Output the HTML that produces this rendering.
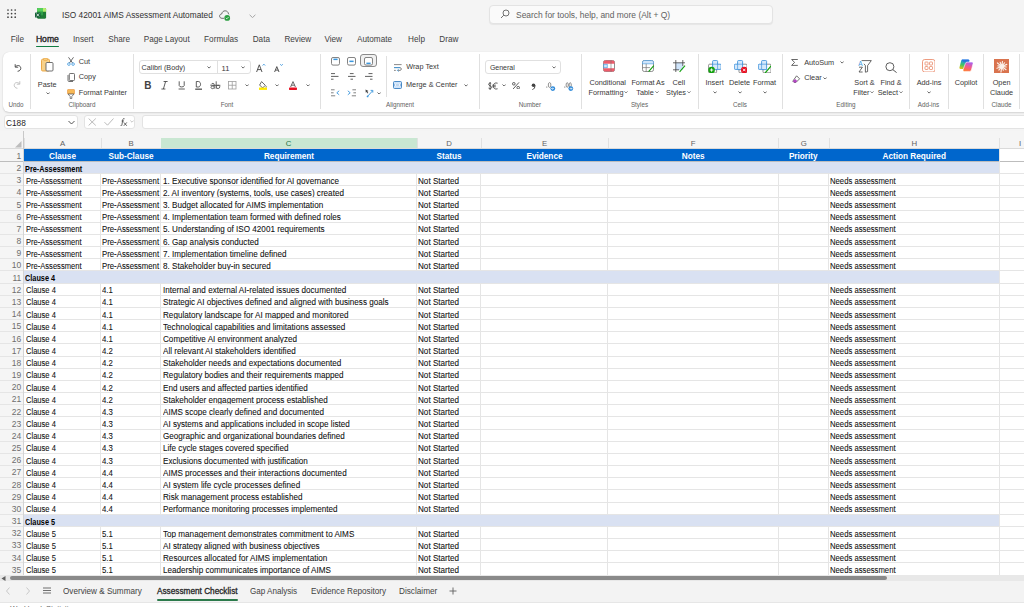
<!DOCTYPE html>
<html><head><meta charset="utf-8">
<style>
*{box-sizing:border-box;margin:0;padding:0}
html,body{width:1024px;height:607px;overflow:hidden;background:#f4f4f4;font-family:"Liberation Sans",sans-serif;color:#242424}
.a{position:absolute;white-space:nowrap}
.t{position:absolute;white-space:nowrap;line-height:1}
/* title */
#title{left:62px;top:10.7px;font-size:8.8px;color:#303030;transform:scaleX(0.943);transform-origin:0 0}
#search{left:489px;top:4.5px;width:284px;height:19.5px;background:#fafafa;border:1px solid #e3e3e3;border-radius:4px;box-shadow:0 1px 1px rgba(0,0,0,0.06)}
#stext{left:516px;top:10.5px;font-size:8.45px;color:#616161}
.menu{top:35.5px;font-size:8.2px;color:#424242}
#ribbon{left:3px;top:51.5px;width:1040px;height:60px;background:#fff;border-radius:6px;box-shadow:0 0 1px rgba(0,0,0,0.14),0 1px 2px rgba(0,0,0,0.13)}
.sep{position:absolute;width:1px;background:#e0e0e0}
.rl{position:absolute;white-space:nowrap;line-height:1;font-size:7.6px;color:#424242}
.gl{position:absolute;white-space:nowrap;line-height:1;font-size:6.6px;color:#616161}
/* formula bar */
.fbox{position:absolute;background:#fff;border:1px solid #e3e3e3;border-radius:3px}
/* grid */
.colhdr{position:absolute;background:#f5f5f5}
.ch{position:absolute;top:138px;height:11px;border-left:1px solid #e1e1e1;text-align:center;font-size:7.8px;color:#616161;line-height:11px}
.ch.sel{background:#c9e7d2;border-left:none;color:#217346}
.rn{position:absolute;left:0;width:23.5px;background:#f5f5f5;text-align:right;padding-right:2.5px;font-size:8.5px;color:#6e6e6e}
.rn span{position:absolute;right:2.3px;bottom:0.7px;line-height:1}
.hrow{position:absolute;left:23.5px;background:#0066cc}
.srow{position:absolute;left:23.5px;background:#d9e1f2}
.ht{position:absolute;text-align:center;font-weight:bold;color:#fff;font-size:8.6px;line-height:1;transform:scaleX(.955);transform-origin:50% 0;white-space:nowrap}
.st{position:absolute;font-weight:bold;color:#000;font-size:8.5px;line-height:1;transform:scaleX(.86);transform-origin:0 0;white-space:nowrap}
.cw{position:absolute;overflow:hidden;height:10px}
.ct{white-space:nowrap;color:#111;font-size:8.5px;line-height:1;-webkit-text-stroke:0.08px #111;transform:scaleX(.93);transform-origin:0 0}
.hl{position:absolute;left:0;width:1034px;height:1px;background:#e5e5e5}
.hl.frz{background:#bdbdbd}
.vl{position:absolute;width:1px;background:#e5e5e5}
.tab{top:587.1px;font-size:9px;color:#424242;transform-origin:0 0}
#gridwrap{position:absolute;left:0;top:0;width:1024px;height:575px;overflow:hidden}
</style></head>
<body>
<!-- title bar -->
<svg class="a" style="left:7.2px;top:8.9px" width="10" height="10" viewBox="0 0 10 10"><g fill="#424242"><circle cx="1.0" cy="1.0" r="0.85"/><circle cx="4.6" cy="1.0" r="0.85"/><circle cx="8.2" cy="1.0" r="0.85"/><circle cx="1.0" cy="4.6" r="0.85"/><circle cx="4.6" cy="4.6" r="0.85"/><circle cx="8.2" cy="4.6" r="0.85"/><circle cx="1.0" cy="8.2" r="0.85"/><circle cx="4.6" cy="8.2" r="0.85"/><circle cx="8.2" cy="8.2" r="0.85"/></g></svg>
<svg class="a" style="left:35px;top:8px" width="12" height="12" viewBox="0 0 12 12">
<path d="M3.2 0 H9.9 C10.6 0 11.1 0.5 11.1 1.2 V9.6 C11.1 10.3 10.6 10.8 9.9 10.8 H3.2 C2.5 10.8 2 10.3 2 9.6 V1.2 C2 0.5 2.5 0 3.2 0 Z" fill="#1e7b36"/>
<path d="M3.2 0 H8 V3.8 H2 V1.2 C2 0.5 2.5 0 3.2 0 Z" fill="#55cf5c"/>
<path d="M8 0 H9.9 C10.6 0 11.1 0.5 11.1 1.2 V3.8 H8 Z" fill="#b4ec6e"/>
<rect x="2" y="3.8" width="6" height="3.5" fill="#2e9e48"/>
<rect x="0" y="4.4" width="5.6" height="5.2" rx="0.7" fill="#17603a"/>
<path d="M1.5 5.6 L4.1 8.4 M4.1 5.6 L1.5 8.4" stroke="#e8f3ea" stroke-width="0.85"/>
</svg>
<div id="title" class="t">ISO 42001 AIMS Assessment Automated</div>
<svg class="a" style="left:218.5px;top:9.5px" width="12" height="11" viewBox="0 0 12 11">
<path d="M5 8.3 H3 C1.4 8.3 0.6 7.2 0.6 6.1 C0.6 4.9 1.5 4 2.7 4 C3 2.1 4.4 0.8 6.1 0.8 C7.9 0.8 9.3 2.1 9.5 3.9 C9.8 4 10 4.1 10.2 4.3" fill="none" stroke="#616161" stroke-width="0.9"/>
<circle cx="8.2" cy="7.9" r="2.9" fill="#2ea043"/>
<path d="M6.9 7.9 L7.8 8.8 L9.5 7.1" fill="none" stroke="#fff" stroke-width="0.8"/>
</svg>
<svg class="a" style="left:248.5px;top:13.5px" width="7" height="4.5" viewBox="0 0 7 4.5"><path d="M0.6 0.8 L3.5 3.6 L6.4 0.8" fill="none" stroke="#8a8a8a" stroke-width="0.75"/></svg>
<div id="search" class="a"></div>
<svg class="a" style="left:500px;top:9px" width="10" height="10" viewBox="0 0 10 10"><circle cx="6" cy="4" r="3" fill="none" stroke="#616161" stroke-width="0.9"/><path d="M3.8 6.2 L1 9" stroke="#616161" stroke-width="0.9"/></svg>
<div id="stext" class="t">Search for tools, help, and more (Alt + Q)</div>

<!-- menu -->
<div class="t menu" style="left:10.8px">File</div>
<div class="t menu" style="left:35.9px;font-size:8.6px;color:#242424;-webkit-text-stroke:0.35px #242424;top:35.2px">Home</div>
<div class="a" style="left:36px;top:45.5px;width:23px;height:1.5px;background:#107c41;border-radius:1px"></div>
<div class="t menu" style="left:73.1px">Insert</div>
<div class="t menu" style="left:108.3px">Share</div>
<div class="t menu" style="left:143.7px">Page Layout</div>
<div class="t menu" style="left:204.1px">Formulas</div>
<div class="t menu" style="left:252.7px">Data</div>
<div class="t menu" style="left:284.4px">Review</div>
<div class="t menu" style="left:324.4px">View</div>
<div class="t menu" style="left:357px">Automate</div>
<div class="t menu" style="left:408.1px">Help</div>
<div class="t menu" style="left:439.3px">Draw</div>

<!-- ribbon -->
<div id="ribbon" class="a"></div>
<div class="sep" style="left:29.5px;top:54px;height:55px"></div>
<div class="sep" style="left:133.0px;top:54px;height:55px"></div>
<div class="sep" style="left:320.0px;top:54px;height:55px"></div>
<div class="sep" style="left:478.5px;top:54px;height:55px"></div>
<div class="sep" style="left:581.0px;top:54px;height:55px"></div>
<div class="sep" style="left:697.5px;top:54px;height:55px"></div>
<div class="sep" style="left:781.5px;top:54px;height:55px"></div>
<div class="sep" style="left:909.0px;top:54px;height:55px"></div>
<div class="sep" style="left:948.0px;top:54px;height:55px"></div>
<div class="sep" style="left:983.0px;top:54px;height:55px"></div>
<div class="sep" style="left:1018.5px;top:54px;height:55px"></div>
<div class="sep" style="left:386.0px;top:56px;height:41px"></div>
<div class="t" style="left:-44.00px;width:120px;text-align:center;top:101.78px;font-size:6.3px;color:#616161;">Undo</div>
<div class="t" style="left:22.00px;width:120px;text-align:center;top:101.78px;font-size:6.3px;color:#616161;">Clipboard</div>
<div class="t" style="left:167.00px;width:120px;text-align:center;top:101.78px;font-size:6.3px;color:#616161;">Font</div>
<div class="t" style="left:340.00px;width:120px;text-align:center;top:101.78px;font-size:6.3px;color:#616161;">Alignment</div>
<div class="t" style="left:470.00px;width:120px;text-align:center;top:101.78px;font-size:6.3px;color:#616161;">Number</div>
<div class="t" style="left:579.50px;width:120px;text-align:center;top:101.78px;font-size:6.3px;color:#616161;">Styles</div>
<div class="t" style="left:680.00px;width:120px;text-align:center;top:101.78px;font-size:6.3px;color:#616161;">Cells</div>
<div class="t" style="left:786.00px;width:120px;text-align:center;top:101.78px;font-size:6.3px;color:#616161;">Editing</div>
<div class="t" style="left:868.50px;width:120px;text-align:center;top:101.78px;font-size:6.3px;color:#616161;">Add-ins</div>
<div class="t" style="left:941.50px;width:120px;text-align:center;top:101.78px;font-size:6.3px;color:#616161;">Claude</div>
<svg class="a" style="left:12.5px;top:62.6px" width="9" height="9" viewBox="0 0 9 9"><path d="M2.2 1.2 V4.2 H5.2" fill="none" stroke="#424242" stroke-width="0.9"/><path d="M2.4 4 C3.6 2.2 6.6 1.8 7.6 4.2 C8.4 6.2 6.8 8.2 4.6 8.3" fill="none" stroke="#424242" stroke-width="0.9"/></svg>
<svg class="a" style="left:12.5px;top:79.8px" width="9" height="9" viewBox="0 0 9 9"><path d="M6.8 1.2 V4.2 H3.8" fill="none" stroke="#bdbdbd" stroke-width="0.9"/><path d="M6.6 4 C5.4 2.2 2.4 1.8 1.4 4.2 C0.6 6.2 2.2 8.2 4.4 8.3" fill="none" stroke="#bdbdbd" stroke-width="0.9"/></svg>
<svg class="a" style="left:41px;top:58px" width="13" height="14" viewBox="0 0 13 14"><rect x="0.5" y="1.2" width="8" height="11.8" rx="1.2" fill="#f8d28a" stroke="#e9a23b" stroke-width="0.9"/><rect x="2.5" y="0.3" width="4" height="2" rx="0.6" fill="#f8d28a" stroke="#e9a23b" stroke-width="0.7"/><rect x="5" y="4.5" width="7" height="8.5" rx="1" fill="#fff" stroke="#616161" stroke-width="0.9"/></svg>
<div class="t" style="left:-12.80px;width:120px;text-align:center;top:80.85px;font-size:7.3px;color:#383838;">Paste</div>
<svg class="a" style="left:45.6px;top:91.9px" width="4.2" height="2.6" viewBox="0 0 4.2 2.6"><path d="M0.5 0.5 L2.1 2.1 L3.7 0.5" fill="none" stroke="#424242" stroke-width="0.8"/></svg>
<svg class="a" style="left:66.5px;top:57px" width="8" height="9" viewBox="0 0 8 9"><path d="M1.5 0.3 L5.6 6 M6.5 0.3 L2.4 6" stroke="#424242" stroke-width="0.8"/><circle cx="1.9" cy="7.1" r="1.3" fill="none" stroke="#3a96dd" stroke-width="0.8"/><circle cx="6.1" cy="7.1" r="1.3" fill="none" stroke="#3a96dd" stroke-width="0.8"/></svg>
<div class="t" style="left:78.80px;top:57.65px;font-size:7.3px;color:#383838;">Cut</div>
<svg class="a" style="left:66.5px;top:72.8px" width="8" height="9" viewBox="0 0 8 9"><rect x="2.3" y="0.5" width="5.2" height="7" rx="0.8" fill="#fff" stroke="#616161" stroke-width="0.9"/><path d="M1 2 V7.5 C1 8.1 1.4 8.5 2 8.5 H6" fill="none" stroke="#616161" stroke-width="0.9"/></svg>
<div class="t" style="left:78.80px;top:73.35px;font-size:7.3px;color:#383838;">Copy</div>
<svg class="a" style="left:67px;top:88.5px" width="8" height="10" viewBox="0 0 8 10"><rect x="0.5" y="0.5" width="7" height="4.5" rx="0.6" fill="#f7b955" stroke="#e8913a" stroke-width="0.6"/><path d="M1 5 H7 L4.8 7.5 V9.5 H3.2 V7.5 Z" fill="#fff" stroke="#616161" stroke-width="0.8"/></svg>
<div class="t" style="left:78.80px;top:88.85px;font-size:7.3px;color:#383838;">Format Painter</div>
<div class="a" style="left:138.5px;top:60.3px;width:112px;height:13.8px;border:1px solid #e0e0e0;border-radius:3px;background:#fff"></div>
<div class="a" style="left:216.5px;top:60.3px;width:1px;height:13.8px;background:#e0e0e0"></div>
<div class="t" style="left:141.60px;top:64.26px;font-size:7.2px;color:#383838;">Calibri (Body)</div>
<svg class="a" style="left:206.6px;top:66.2px" width="4.2" height="2.6" viewBox="0 0 4.2 2.6"><path d="M0.5 0.5 L2.1 2.1 L3.7 0.5" fill="none" stroke="#424242" stroke-width="0.8"/></svg>
<div class="t" style="left:221.50px;top:64.61px;font-size:7.6px;color:#383838;">11</div>
<svg class="a" style="left:241.20000000000002px;top:66.2px" width="4.2" height="2.6" viewBox="0 0 4.2 2.6"><path d="M0.5 0.5 L2.1 2.1 L3.7 0.5" fill="none" stroke="#424242" stroke-width="0.8"/></svg>
<svg class="a" style="left:255.5px;top:63px" width="10" height="10" viewBox="0 0 10 10"><path d="M0.6 9 L3.3 1.8 L6 9 M1.6 6.6 H5" fill="none" stroke="#424242" stroke-width="0.9"/><path d="M6.6 2.6 L7.9 1.1 L9.2 2.6" fill="none" stroke="#3a96dd" stroke-width="0.8"/></svg>
<svg class="a" style="left:273.5px;top:63px" width="10" height="10" viewBox="0 0 10 10"><path d="M0.6 9 L2.8 3.6 L5 9 M1.4 7.1 H4.2" fill="none" stroke="#424242" stroke-width="0.9"/><path d="M6.2 1.1 L7.5 2.6 L8.8 1.1" fill="none" stroke="#3a96dd" stroke-width="0.8"/></svg>
<div class="t" style="left:144.2px;top:80.9px;font-size:10px;font-weight:bold;color:#424242">B</div>
<svg class="a" style="left:160.5px;top:81px" width="7" height="8.5" viewBox="0 0 7 8.5"><path d="M2.6 0.5 H6.6 M0.4 8 H4.4 M4.6 0.5 L2.4 8" fill="none" stroke="#424242" stroke-width="0.85"/></svg>
<svg class="a" style="left:178px;top:81px" width="7.5" height="8.5" viewBox="0 0 7.5 8.5"><path d="M1.2 0.3 V4.6 C1.2 6.4 6.2 6.4 6.2 4.6 V0.3" fill="none" stroke="#424242" stroke-width="0.85"/><path d="M0.6 8 H6.8" stroke="#424242" stroke-width="0.85"/></svg>
<svg class="a" style="left:194.8px;top:80.8px" width="7.5" height="9" viewBox="0 0 7.5 9"><path d="M1.3 0.5 H3.3 C6.3 0.5 6.3 6 3.3 6 H1.3 Z" fill="none" stroke="#424242" stroke-width="0.85"/><rect x="0.2" y="7.5" width="7" height="1.4" fill="#616161"/></svg>
<svg class="a" style="left:210px;top:81px" width="11" height="8.5" viewBox="0 0 11 8.5"><path d="M0.4 4.3 H10.4" stroke="#424242" stroke-width="0.8"/><path d="M1.2 3.4 C1.8 2 4.2 2 4.2 3.6 V7.8 M4.2 5.2 C2.2 4.6 0.8 5.3 1 6.6 C1.2 8 3.6 8 4.2 6.6" fill="none" stroke="#424242" stroke-width="0.8"/><path d="M6.2 0.3 V7.8 M6.2 5.6 C6.6 3.8 9.8 3.8 9.8 5.9 C9.8 8 6.6 8 6.2 6.3" fill="none" stroke="#424242" stroke-width="0.8"/></svg>
<svg class="a" style="left:228px;top:81px" width="8.5" height="8.5" viewBox="0 0 8.5 8.5"><rect x="0.5" y="0.5" width="7.5" height="7.5" fill="none" stroke="#9e9e9e" stroke-width="0.8"/><path d="M4.25 0.5 V8 M0.5 4.25 H8" stroke="#9e9e9e" stroke-width="0.8"/></svg>
<svg class="a" style="left:245.1px;top:83.9px" width="4.2" height="2.6" viewBox="0 0 4.2 2.6"><path d="M0.5 0.5 L2.1 2.1 L3.7 0.5" fill="none" stroke="#424242" stroke-width="0.8"/></svg>
<svg class="a" style="left:258.5px;top:80.8px" width="8" height="9" viewBox="0 0 8 9"><path d="M2.6 0.6 L6.3 4.3 L3.6 7 L0.6 4 Z" fill="none" stroke="#424242" stroke-width="0.8"/><path d="M6.8 4.8 C7.5 5.8 7.5 6.5 6.8 6.5" fill="none" stroke="#424242" stroke-width="0.7"/><rect x="0" y="6.6" width="8" height="2.3" fill="#ffea00"/></svg>
<svg class="a" style="left:275.2px;top:83.9px" width="4.2" height="2.6" viewBox="0 0 4.2 2.6"><path d="M0.5 0.5 L2.1 2.1 L3.7 0.5" fill="none" stroke="#424242" stroke-width="0.8"/></svg>
<svg class="a" style="left:288.8px;top:80.8px" width="8" height="9" viewBox="0 0 8 9"><path d="M1.6 6 L4 0.6 L6.4 6 M2.4 4.2 H5.6" fill="none" stroke="#424242" stroke-width="0.8"/><rect x="0" y="6.6" width="8" height="2.3" rx="0.6" fill="#e81123"/></svg>
<svg class="a" style="left:305.9px;top:83.9px" width="4.2" height="2.6" viewBox="0 0 4.2 2.6"><path d="M0.5 0.5 L2.1 2.1 L3.7 0.5" fill="none" stroke="#424242" stroke-width="0.8"/></svg>
<div class="a" style="left:360.4px;top:54.2px;width:16.5px;height:13.3px;border:1px solid #8a8a8a;border-radius:3px;background:#f0f0f0"></div>
<svg class="a" style="left:330.5px;top:57.3px" width="9" height="8.6" viewBox="0 0 9 8.6"><rect x="0.5" y="0.5" width="8" height="7.6" rx="1.5" fill="#fff" stroke="#757575" stroke-width="0.9"/><rect x="2.4" y="1.6" width="4.2" height="1.5" fill="#3a96dd"/></svg>
<svg class="a" style="left:347.2px;top:57.3px" width="9" height="8.6" viewBox="0 0 9 8.6"><rect x="0.5" y="0.5" width="8" height="7.6" rx="1.5" fill="#fff" stroke="#757575" stroke-width="0.9"/><rect x="2.4" y="3.6" width="4.2" height="1.5" fill="#3a96dd"/></svg>
<svg class="a" style="left:364.2px;top:57.3px" width="9" height="8.6" viewBox="0 0 9 8.6"><rect x="0.5" y="0.5" width="8" height="7.6" rx="1.5" fill="#fff" stroke="#757575" stroke-width="0.9"/><rect x="2.4" y="5.6" width="4.2" height="1.5" fill="#3a96dd"/></svg>
<svg class="a" style="left:331px;top:73px" width="7.5" height="7" viewBox="0 0 7.5 7"><path d="M0 0.6 H4 M0 3.4 H7.5 M0 6.2 H2.5" stroke="#616161" stroke-width="1"/></svg>
<svg class="a" style="left:348px;top:73px" width="7.5" height="7" viewBox="0 0 7.5 7"><path d="M1.9 0.6 H5.6 M0 3.4 H7.5 M2.5 6.2 H5" stroke="#616161" stroke-width="1"/></svg>
<svg class="a" style="left:365px;top:73px" width="7.5" height="7" viewBox="0 0 7.5 7"><path d="M3.5 0.6 H7.5 M0 3.4 H7.5 M5 6.2 H7.5" stroke="#616161" stroke-width="1"/></svg>
<svg class="a" style="left:331px;top:89px" width="9" height="8" viewBox="0 0 9 8"><path d="M0 0.8 H3.6 M0 3.8 H2.6 M0 6.8 H4.2" stroke="#757575" stroke-width="0.9"/><path d="M8.2 1.8 L5.8 3.8 L8.2 5.8" fill="none" stroke="#3a96dd" stroke-width="0.9"/></svg>
<svg class="a" style="left:347px;top:89px" width="9" height="8" viewBox="0 0 9 8"><path d="M5.4 0.8 H9 M6.4 3.8 H9 M4.8 6.8 H9" stroke="#757575" stroke-width="0.9"/><path d="M0.8 1.8 L3.2 3.8 L0.8 5.8" fill="none" stroke="#3a96dd" stroke-width="0.9"/></svg>
<svg class="a" style="left:365px;top:89px" width="8.5" height="8.5" viewBox="0 0 8.5 8.5"><path d="M0.5 0.5 L3.5 2 L2.3 2.6 L3.3 4 L2.6 4.4 L1.7 3 L0.8 3.8 Z" fill="#424242"/><path d="M2 8 L7.6 1.8 M5.6 1.4 H7.8 V3.6" fill="none" stroke="#3a96dd" stroke-width="0.9"/><circle cx="2.6" cy="7.4" r="0.9" fill="#3a96dd"/></svg>
<svg class="a" style="left:377.29999999999995px;top:91.7px" width="4.2" height="2.6" viewBox="0 0 4.2 2.6"><path d="M0.5 0.5 L2.1 2.1 L3.7 0.5" fill="none" stroke="#424242" stroke-width="0.8"/></svg>
<svg class="a" style="left:393.8px;top:63.8px" width="8" height="8" viewBox="0 0 8 8"><path d="M0 0.6 H7.6 M0 3.6 H6 C7.8 3.6 7.8 6.4 6 6.4 H3.6" fill="none" stroke="#757575" stroke-width="0.85"/><path d="M0 6.4 H1.8" stroke="#757575" stroke-width="0.85"/><path d="M4.6 5.2 L3.4 6.4 L4.6 7.6" fill="none" stroke="#3a96dd" stroke-width="0.85"/><path d="M0 3.6 H6" stroke="#3a96dd" stroke-width="0.85"/></svg>
<div class="t" style="left:406.20px;top:63.15px;font-size:7.3px;color:#383838;">Wrap Text</div>
<svg class="a" style="left:392.8px;top:81px" width="9" height="8" viewBox="0 0 9 8"><rect x="0.5" y="0.5" width="8" height="7" rx="1" fill="#cfe4fa" stroke="#3a7fc1" stroke-width="0.9"/><path d="M0.5 4 H8.5" stroke="#3a7fc1" stroke-width="0.7"/><path d="M2 4 H7 M3.2 2.8 L2 4 L3.2 5.2 M5.8 2.8 L7 4 L5.8 5.2" fill="none" stroke="#fff" stroke-width="0.7"/></svg>
<div class="t" style="left:406.00px;top:80.65px;font-size:7.3px;color:#383838;">Merge &amp; Center</div>
<svg class="a" style="left:463.7px;top:84.0px" width="4.2" height="2.6" viewBox="0 0 4.2 2.6"><path d="M0.5 0.5 L2.1 2.1 L3.7 0.5" fill="none" stroke="#424242" stroke-width="0.8"/></svg>
<div class="a" style="left:485.3px;top:60.3px;width:76px;height:13.4px;border:1px solid #e0e0e0;border-radius:3px;background:#fff"></div>
<div class="t" style="left:489.90px;top:64.19px;font-size:7.0px;color:#383838;">General</div>
<svg class="a" style="left:552.1px;top:66.3px" width="4.2" height="2.6" viewBox="0 0 4.2 2.6"><path d="M0.5 0.5 L2.1 2.1 L3.7 0.5" fill="none" stroke="#424242" stroke-width="0.8"/></svg>
<svg class="a" style="left:488px;top:81.5px" width="10" height="8" viewBox="0 0 10 8"><path d="M3.2 1.6 C2.8 0.9 0.6 0.9 0.6 2.3 C0.6 3.9 3.6 3.6 3.6 5.4 C3.6 6.9 1.2 6.9 0.5 6.1 M2.1 0 V8" fill="none" stroke="#424242" stroke-width="0.85"/><path d="M9.6 1.2 C7 0.2 5.2 2 5.2 4 C5.2 6 7 7.8 9.6 6.8 M4.4 3.2 H7.8 M4.4 4.8 H7.8" fill="none" stroke="#424242" stroke-width="0.85"/></svg>
<svg class="a" style="left:501.5px;top:83.5px" width="4.2" height="2.6" viewBox="0 0 4.2 2.6"><path d="M0.5 0.5 L2.1 2.1 L3.7 0.5" fill="none" stroke="#424242" stroke-width="0.8"/></svg>
<svg class="a" style="left:511.8px;top:81.8px" width="8" height="7.5" viewBox="0 0 8 7.5"><circle cx="1.8" cy="1.8" r="1.3" fill="none" stroke="#424242" stroke-width="0.85"/><circle cx="6.2" cy="5.7" r="1.3" fill="none" stroke="#424242" stroke-width="0.85"/><path d="M7 0.4 L1 7.1" stroke="#424242" stroke-width="0.85"/></svg>
<svg class="a" style="left:531px;top:82.5px" width="5" height="7" viewBox="0 0 5 7"><circle cx="2.5" cy="2.2" r="1.8" fill="#424242"/><path d="M3.9 2.6 C4 4.8 3 6 1.4 6.6" fill="none" stroke="#424242" stroke-width="1"/></svg>
<svg class="a" style="left:546px;top:81.5px" width="10" height="9" viewBox="0 0 10 9"><circle cx="0.8" cy="5" r="0.6" fill="#616161"/><ellipse cx="3.6" cy="3" rx="1.3" ry="2.4" fill="none" stroke="#616161" stroke-width="0.7"/><circle cx="6.8" cy="6.6" r="2.4" fill="#2b88d8"/><path d="M5.6 6.6 H8 M6.6 5.6 L5.6 6.6 L6.6 7.6" fill="none" stroke="#fff" stroke-width="0.7"/></svg>
<svg class="a" style="left:563.5px;top:81.5px" width="10" height="9" viewBox="0 0 10 9"><circle cx="0.8" cy="5" r="0.6" fill="#616161"/><ellipse cx="3.2" cy="3" rx="1.1" ry="2.3" fill="none" stroke="#616161" stroke-width="0.7"/><ellipse cx="6.2" cy="3" rx="1.1" ry="2.3" fill="none" stroke="#616161" stroke-width="0.7"/><circle cx="6.8" cy="6.6" r="2.4" fill="#2b88d8"/><path d="M5.6 6.6 H8 M7 5.6 L8 6.6 L7 7.6" fill="none" stroke="#fff" stroke-width="0.7"/></svg>
<svg class="a" style="left:602.8px;top:60px" width="12" height="12" viewBox="0 0 12 12"><rect x="0.5" y="0.5" width="11" height="11" rx="1.8" fill="#fff" stroke="#757575" stroke-width="0.8"/><path d="M0.5 2.3 C0.5 1.3 1.3 0.5 2.3 0.5 H9.7 C10.7 0.5 11.5 1.3 11.5 2.3 V3.8 H0.5 Z" fill="#ee5b6a"/><path d="M0.5 8.2 H11.5 V9.7 C11.5 10.7 10.7 11.5 9.7 11.5 H2.3 C1.3 11.5 0.5 10.7 0.5 9.7 Z" fill="#ee5b6a"/><rect x="0.8" y="4.2" width="3.4" height="3.6" fill="#cfe4fa" stroke="#3a96dd" stroke-width="0.6"/><path d="M8 0.5 V11.5" stroke="#757575" stroke-width="0.6"/></svg>
<div class="t" style="left:547.70px;width:120px;text-align:center;top:78.95px;font-size:7.3px;color:#383838;">Conditional</div>
<div class="t" style="left:548.50px;width:120px;text-align:center;top:88.65px;font-size:7.3px;color:#383838;">Formatting<svg width="4" height="2.5" viewBox="0 0 4 2.5" style="margin-left:1px;vertical-align:1.5px"><path d="M0.5 0.4 L2 1.9 L3.5 0.4" fill="none" stroke="#424242" stroke-width="0.7"/></svg></div>
<svg class="a" style="left:642px;top:60px" width="12.5" height="12.5" viewBox="0 0 12.5 12.5"><rect x="0.5" y="0.5" width="11" height="11" rx="1.8" fill="#fff" stroke="#757575" stroke-width="0.8"/><path d="M0.5 2.3 C0.5 1.3 1.3 0.5 2.3 0.5 H9.7 C10.7 0.5 11.5 1.3 11.5 2.3 V3.8 H0.5 Z" fill="#cfe4fa" stroke="#3a96dd" stroke-width="0.6"/><path d="M4.2 3.8 V11.5 M0.5 7.6 H8" stroke="#757575" stroke-width="0.7"/><path d="M6.6 11.6 L11.8 5.6" stroke="#13a10e" stroke-width="1.1"/></svg>
<div class="t" style="left:588.00px;width:120px;text-align:center;top:78.95px;font-size:7.3px;color:#383838;">Format As</div>
<div class="t" style="left:587.50px;width:120px;text-align:center;top:88.65px;font-size:7.3px;color:#383838;">Table<svg width="4" height="2.5" viewBox="0 0 4 2.5" style="margin-left:1px;vertical-align:1.5px"><path d="M0.5 0.4 L2 1.9 L3.5 0.4" fill="none" stroke="#424242" stroke-width="0.7"/></svg></div>
<svg class="a" style="left:673px;top:60px" width="12.5" height="12.5" viewBox="0 0 12.5 12.5"><rect x="2.6" y="2.6" width="7.4" height="7.4" fill="#cfe4fa"/><path d="M2.8 0 V12 M9.8 0 V6 M0 2.8 H12 M0 9.8 H6" stroke="#424242" stroke-width="0.8"/><path d="M6.6 11.8 L12 5.6" stroke="#13a10e" stroke-width="1.1"/></svg>
<div class="t" style="left:618.80px;width:120px;text-align:center;top:78.95px;font-size:7.3px;color:#383838;">Cell</div>
<div class="t" style="left:618.50px;width:120px;text-align:center;top:88.65px;font-size:7.3px;color:#383838;">Styles<svg width="4" height="2.5" viewBox="0 0 4 2.5" style="margin-left:1px;vertical-align:1.5px"><path d="M0.5 0.4 L2 1.9 L3.5 0.4" fill="none" stroke="#424242" stroke-width="0.7"/></svg></div>
<svg class="a" style="left:707.8px;top:59.5px" width="13.5" height="13.5" viewBox="0 0 13.5 13.5"><rect x="0.6" y="4.2" width="8" height="8.6" rx="1" fill="none" stroke="#757575" stroke-width="0.8"/><path d="M5.6 0.4 H8.6 C9.2 0.4 9.6 0.8 9.6 1.4 V4.2 H12.2 C12.8 4.2 13.2 4.6 13.2 5.2 V8.4 C13.2 9 12.8 9.4 12.2 9.4 H9.6 V9.6 H4.6 V1.4 C4.6 0.8 5 0.4 5.6 0.4 Z" fill="#d6e9fb" stroke="#2b88d8" stroke-width="0.8"/><path d="M4.6 4.2 H9.6 V9.4" fill="none" stroke="#2b88d8" stroke-width="0.6"/><circle cx="3.6" cy="10" r="3.3" fill="#13a10e"/><path d="M3.6 8.3 V11.7 M1.9 10 H5.3" stroke="#fff" stroke-width="0.9"/></svg>
<svg class="a" style="left:733.5px;top:59.5px" width="13.5" height="13.5" viewBox="0 0 13.5 13.5"><rect x="5" y="4.2" width="8" height="8.6" rx="1" fill="none" stroke="#757575" stroke-width="0.8"/><path d="M4.6 0.4 H7.6 C8.2 0.4 8.6 0.8 8.6 1.4 V9.6 H3.6 V9.4 H1.3 C0.7 9.4 0.3 9 0.3 8.4 V5.2 C0.3 4.6 0.7 4.2 1.3 4.2 H3.6 V1.4 C3.6 0.8 4 0.4 4.6 0.4 Z" fill="#d6e9fb" stroke="#2b88d8" stroke-width="0.8"/><path d="M8.6 4.2 H3.6 V9.4" fill="none" stroke="#2b88d8" stroke-width="0.6"/><circle cx="10.2" cy="10" r="3.3" fill="#e81123"/><path d="M9 8.8 L11.4 11.2 M11.4 8.8 L9 11.2" stroke="#fff" stroke-width="0.9"/></svg>
<svg class="a" style="left:757.8px;top:59.5px" width="13.5" height="13.5" viewBox="0 0 13.5 13.5"><rect x="5" y="4.2" width="8" height="8.6" rx="1" fill="none" stroke="#757575" stroke-width="0.8"/><path d="M4.6 0.4 H7.6 C8.2 0.4 8.6 0.8 8.6 1.4 V9.6 H3.6 V9.4 H1.3 C0.7 9.4 0.3 9 0.3 8.4 V5.2 C0.3 4.6 0.7 4.2 1.3 4.2 H3.6 V1.4 C3.6 0.8 4 0.4 4.6 0.4 Z" fill="#d6e9fb" stroke="#2b88d8" stroke-width="0.8"/><path d="M8.6 4.2 H3.6 V9.4" fill="none" stroke="#2b88d8" stroke-width="0.6"/><path d="M7.4 12.6 L13.2 5.8" stroke="#13a10e" stroke-width="1.3" stroke-linecap="round"/></svg>
<div class="t" style="left:654.60px;width:120px;text-align:center;top:78.95px;font-size:7.3px;color:#383838;">Insert</div>
<svg class="a" style="left:712.6999999999999px;top:91.2px" width="4.2" height="2.6" viewBox="0 0 4.2 2.6"><path d="M0.5 0.5 L2.1 2.1 L3.7 0.5" fill="none" stroke="#424242" stroke-width="0.8"/></svg>
<div class="t" style="left:679.50px;width:120px;text-align:center;top:78.95px;font-size:7.3px;color:#383838;">Delete</div>
<svg class="a" style="left:737.8px;top:91.2px" width="4.2" height="2.6" viewBox="0 0 4.2 2.6"><path d="M0.5 0.5 L2.1 2.1 L3.7 0.5" fill="none" stroke="#424242" stroke-width="0.8"/></svg>
<div class="t" style="left:704.50px;width:120px;text-align:center;top:78.95px;font-size:7.3px;color:#383838;">Format</div>
<svg class="a" style="left:762.9px;top:91.2px" width="4.2" height="2.6" viewBox="0 0 4.2 2.6"><path d="M0.5 0.5 L2.1 2.1 L3.7 0.5" fill="none" stroke="#424242" stroke-width="0.8"/></svg>
<svg class="a" style="left:791.3px;top:59.2px" width="7.5" height="7" viewBox="0 0 7.5 7"><path d="M6.8 0.5 H0.6 L3.6 3.4 L0.6 6.4 H6.8" fill="none" stroke="#424242" stroke-width="0.8"/></svg>
<div class="t" style="left:804.20px;top:58.95px;font-size:7.3px;color:#383838;">AutoSum</div>
<svg class="a" style="left:840.1px;top:61.2px" width="4.2" height="2.6" viewBox="0 0 4.2 2.6"><path d="M0.5 0.5 L2.1 2.1 L3.7 0.5" fill="none" stroke="#424242" stroke-width="0.8"/></svg>
<svg class="a" style="left:792.2px;top:74.8px" width="8.5" height="8" viewBox="0 0 8.5 8"><path d="M4.6 0.8 L7.6 3.8 L4 7.4 H2 L0.8 6.2 Z" fill="#fff" stroke="#424242" stroke-width="0.75"/><path d="M0.8 6.2 L3.1 3.9 L5.3 6.1 L4 7.4 H2 Z" fill="#b146c2"/></svg>
<div class="t" style="left:804.20px;top:74.15px;font-size:7.3px;color:#383838;">Clear</div>
<svg class="a" style="left:823.1px;top:76.5px" width="4.2" height="2.6" viewBox="0 0 4.2 2.6"><path d="M0.5 0.5 L2.1 2.1 L3.7 0.5" fill="none" stroke="#424242" stroke-width="0.8"/></svg>
<svg class="a" style="left:857.8px;top:59.5px" width="14" height="13" viewBox="0 0 14 13"><text x="0.3" y="5.7" font-size="6.5" font-family="Liberation Sans" fill="#3a96dd">A</text><path d="M1 7.2 H4.4 L1 12 H4.6" fill="none" stroke="#424242" stroke-width="0.8"/><path d="M3.6 0.6 H13.3 L9.6 5.6 V11.6 L7.4 12.2 V5.6 L6 3.8" fill="none" stroke="#424242" stroke-width="0.8"/></svg>
<div class="t" style="left:804.50px;width:120px;text-align:center;top:78.95px;font-size:7.3px;color:#383838;">Sort &amp;</div>
<div class="t" style="left:803.80px;width:120px;text-align:center;top:88.65px;font-size:7.3px;color:#383838;">Filter<svg width="4" height="2.5" viewBox="0 0 4 2.5" style="margin-left:1px;vertical-align:1.5px"><path d="M0.5 0.4 L2 1.9 L3.5 0.4" fill="none" stroke="#424242" stroke-width="0.7"/></svg></div>
<svg class="a" style="left:884.5px;top:61.8px" width="13" height="11" viewBox="0 0 13 11"><circle cx="4.9" cy="4.7" r="4" fill="none" stroke="#424242" stroke-width="0.85"/><path d="M7.8 7.6 L11.6 10.6" stroke="#424242" stroke-width="0.9"/></svg>
<div class="t" style="left:831.00px;width:120px;text-align:center;top:78.95px;font-size:7.3px;color:#383838;">Find &amp;</div>
<div class="t" style="left:830.30px;width:120px;text-align:center;top:88.65px;font-size:7.3px;color:#383838;">Select<svg width="4" height="2.5" viewBox="0 0 4 2.5" style="margin-left:1px;vertical-align:1.5px"><path d="M0.5 0.4 L2 1.9 L3.5 0.4" fill="none" stroke="#424242" stroke-width="0.7"/></svg></div>
<svg class="a" style="left:921.8px;top:58.8px" width="13.5" height="13.5" viewBox="0 0 13.5 13.5"><rect x="0.5" y="0.5" width="12.5" height="12.5" rx="2.2" fill="none" stroke="#e8825f" stroke-width="0.8"/><rect x="3" y="3" width="3" height="3" rx="0.6" fill="none" stroke="#e8825f" stroke-width="0.75"/><rect x="7.5" y="3" width="3" height="3" rx="0.6" fill="none" stroke="#e8825f" stroke-width="0.75"/><rect x="3" y="7.5" width="3" height="3" rx="0.6" fill="none" stroke="#e8825f" stroke-width="0.75"/><rect x="7.5" y="7.5" width="3" height="3" rx="0.6" fill="none" stroke="#e8825f" stroke-width="0.75"/></svg>
<div class="t" style="left:869.00px;width:120px;text-align:center;top:78.65px;font-size:7.3px;color:#383838;">Add-ins</div>
<svg class="a" style="left:927.1px;top:91.0px" width="4.2" height="2.6" viewBox="0 0 4.2 2.6"><path d="M0.5 0.5 L2.1 2.1 L3.7 0.5" fill="none" stroke="#424242" stroke-width="0.8"/></svg>
<svg class="a" style="left:958.5px;top:59.3px" width="14.5" height="13" viewBox="0 0 14.5 13"><defs><linearGradient id="cpa" x1="0.3" y1="0" x2="0" y2="1"><stop offset="0" stop-color="#1b8ef2"/><stop offset="0.5" stop-color="#3cc46a"/><stop offset="1" stop-color="#f7c300"/></linearGradient><linearGradient id="cpb" x1="0.6" y1="0" x2="0.3" y2="1"><stop offset="0" stop-color="#a960ee"/><stop offset="0.5" stop-color="#f35a8c"/><stop offset="1" stop-color="#ff7b2a"/></linearGradient></defs><path d="M3.6 0.5 H9.2 C10.2 0.5 10.7 1.3 10.4 2.2 L8.1 8.6 C7.8 9.5 7.2 10 6.3 10 H1.6 C0.7 10 0.2 9.2 0.5 8.3 L2.1 2 C2.4 1 2.8 0.5 3.6 0.5 Z" fill="url(#cpa)"/><path d="M2.7 0.5 H9.2 C9.8 0.5 10.2 0.9 10.3 1.3 L9.4 3.2 H4.2 Z" fill="#2d5bd6" opacity="0.55"/><path d="M8.2 3.1 H12.9 C13.8 3.1 14.3 3.9 14 4.8 L12.4 11 C12.1 11.9 11.6 12.4 10.8 12.4 H5.3 C4.3 12.4 3.8 11.6 4.1 10.7 L6.4 4.4 C6.7 3.6 7.3 3.1 8.2 3.1 Z" fill="url(#cpb)" stroke="#fff" stroke-width="0.6"/></svg>
<div class="t" style="left:906.00px;width:120px;text-align:center;top:78.65px;font-size:7.3px;color:#383838;">Copilot</div>
<div class="a" style="left:994px;top:58.7px;width:15.2px;height:14.2px;background:#d9734e"></div>
<svg class="a" style="left:994px;top:58.7px" width="15.2" height="14.2" viewBox="0 0 15.2 14.2"><path d="M7.8 7.4 L12.36 8.04" stroke="#fbf1ea" stroke-width="1.1" stroke-linecap="round"/><path d="M7.8 7.4 L12.06 10.72" stroke="#fbf1ea" stroke-width="1.1" stroke-linecap="round"/><path d="M7.8 7.4 L9.37 11.29" stroke="#fbf1ea" stroke-width="1.1" stroke-linecap="round"/><path d="M7.8 7.4 L6.99 13.14" stroke="#fbf1ea" stroke-width="1.1" stroke-linecap="round"/><path d="M7.8 7.4 L4.84 11.18" stroke="#fbf1ea" stroke-width="1.1" stroke-linecap="round"/><path d="M7.8 7.4 L2.98 9.35" stroke="#fbf1ea" stroke-width="1.1" stroke-linecap="round"/><path d="M7.8 7.4 L3.84 6.84" stroke="#fbf1ea" stroke-width="1.1" stroke-linecap="round"/><path d="M7.8 7.4 L3.39 3.95" stroke="#fbf1ea" stroke-width="1.1" stroke-linecap="round"/><path d="M7.8 7.4 L6.15 3.32" stroke="#fbf1ea" stroke-width="1.1" stroke-linecap="round"/><path d="M7.8 7.4 L8.50 2.45" stroke="#fbf1ea" stroke-width="1.1" stroke-linecap="round"/><path d="M7.8 7.4 L10.63 3.78" stroke="#fbf1ea" stroke-width="1.1" stroke-linecap="round"/><path d="M7.8 7.4 L12.81 5.38" stroke="#fbf1ea" stroke-width="1.1" stroke-linecap="round"/><circle cx="7.8" cy="7.4" r="2.3" fill="#fbf1ea"/></svg>
<div class="t" style="left:941.60px;width:120px;text-align:center;top:79.25px;font-size:7.3px;color:#383838;">Open</div>
<div class="t" style="left:941.50px;width:120px;text-align:center;top:88.65px;font-size:7.3px;color:#383838;">Claude</div>

<!-- formula bar -->
<div class="fbox" style="left:3.5px;top:114.6px;width:74px;height:14px"></div>
<div class="t" style="left:6px;top:118.6px;font-size:8.3px;color:#242424">C188</div>
<svg class="a" style="left:68px;top:119.5px" width="7" height="5" viewBox="0 0 7 5"><path d="M0.5 1 L3.5 4 L6.5 1" fill="none" stroke="#424242" stroke-width="0.9"/></svg>
<div class="fbox" style="left:83.6px;top:114.6px;width:51.6px;height:14px"></div>
<svg class="a" style="left:87.8px;top:117.6px" width="8.5" height="8" viewBox="0 0 8.5 8"><path d="M0.6 0.5 L7.8 7.5 M7.8 0.5 L0.6 7.5" stroke="#a8a8a8" stroke-width="0.8"/></svg>
<svg class="a" style="left:104.3px;top:117.8px" width="10" height="8" viewBox="0 0 10 8"><path d="M0.5 4.2 L3.5 7.2 L9.5 0.5" fill="none" stroke="#a8a8a8" stroke-width="0.8"/></svg>
<svg class="a" style="left:119.8px;top:117.5px" width="8" height="8.5" viewBox="0 0 8 8.5"><path d="M4.6 0.8 C3.8 0.2 3 0.6 2.8 1.6 L1.9 7 C1.7 8 1 8.2 0.3 7.8 M1.6 3 H4" fill="none" stroke="#424242" stroke-width="0.8"/><path d="M3.8 4.4 L6.8 7.8 M6.8 4.4 L3.8 7.8" stroke="#424242" stroke-width="0.8"/></svg>
<svg class="a" style="left:129.8px;top:120px" width="4" height="3" viewBox="0 0 4 3"><path d="M0.3 0.5 L2 2.2 L3.7 0.5" fill="none" stroke="#9e9e9e" stroke-width="0.6"/></svg>
<div class="fbox" style="left:141.8px;top:114.6px;width:890px;height:14px"></div>

<!-- grid -->
<div id="gridwrap">
<div class="a" style="left:0;top:131px;width:1024px;height:444px;background:#fff"></div>
<div class="colhdr" style="left:0;top:131px;width:1024px;height:18px"></div>
<div class="ch" style="left:23.5px;width:77px"><span>A</span></div>
<div class="ch" style="left:100.5px;width:60px"><span>B</span></div>
<div class="ch sel" style="left:160.5px;width:256px"><span>C</span></div>
<div class="ch" style="left:416.5px;width:64px"><span>D</span></div>
<div class="ch" style="left:480.5px;width:127px"><span>E</span></div>
<div class="ch" style="left:607.5px;width:170.5px"><span>F</span></div>
<div class="ch" style="left:778px;width:50.5px"><span>G</span></div>
<div class="ch" style="left:828.5px;width:170.5px"><span>H</span></div>
<div class="ch" style="left:999px;width:41px"><span>I</span></div>
<div class="rn" style="top:149px;height:12.17px"><span>1</span></div>
<div class="hrow" style="top:149px;height:12.17px;width:975.5px"></div>
<div class="ht" style="top:151.8px;left:23.5px;width:77px">Clause</div>
<div class="ht" style="top:151.8px;left:100.5px;width:60px">Sub-Clause</div>
<div class="ht" style="top:151.8px;left:160.5px;width:256px">Requirement</div>
<div class="ht" style="top:151.8px;left:416.5px;width:64px">Status</div>
<div class="ht" style="top:151.8px;left:480.5px;width:127px">Evidence</div>
<div class="ht" style="top:151.8px;left:607.5px;width:170.5px">Notes</div>
<div class="ht" style="top:151.8px;left:778px;width:50.5px">Priority</div>
<div class="ht" style="top:151.8px;left:828.5px;width:170.5px">Action Required</div>
<div class="rn" style="top:161.17px;height:12.17px"><span>2</span></div>
<div class="srow" style="top:161.17px;height:12.17px;width:975.5px"></div>
<div class="st" style="top:164.57px;left:25.2px">Pre-Assessment</div>
<div class="rn" style="top:173.34px;height:12.17px"><span>3</span></div>
<div class="cw" style="top:176.74px;left:25.9px;width:76px"><div class="ct" style="transform:scaleX(0.89)">Pre-Assessment</div></div>
<div class="cw" style="top:176.74px;left:102.4px;width:59px"><div class="ct" style="transform:scaleX(0.915)">Pre-Assessment</div></div>
<div class="cw" style="top:176.74px;left:163.1px;width:255px"><div class="ct" style="transform:scaleX(0.955)">1. Executive sponsor identified for AI governance</div></div>
<div class="cw" style="top:176.74px;left:417.9px;width:63px"><div class="ct" style="transform:scaleX(0.955)">Not Started</div></div>
<div class="cw" style="top:176.74px;left:830.3px;width:169.5px"><div class="ct" style="transform:scaleX(0.907)">Needs assessment</div></div>
<div class="rn" style="top:185.51px;height:12.17px"><span>4</span></div>
<div class="cw" style="top:188.91px;left:25.9px;width:76px"><div class="ct" style="transform:scaleX(0.89)">Pre-Assessment</div></div>
<div class="cw" style="top:188.91px;left:102.4px;width:59px"><div class="ct" style="transform:scaleX(0.915)">Pre-Assessment</div></div>
<div class="cw" style="top:188.91px;left:163.1px;width:255px"><div class="ct" style="transform:scaleX(0.955)">2. AI inventory (systems, tools, use cases) created</div></div>
<div class="cw" style="top:188.91px;left:417.9px;width:63px"><div class="ct" style="transform:scaleX(0.955)">Not Started</div></div>
<div class="cw" style="top:188.91px;left:830.3px;width:169.5px"><div class="ct" style="transform:scaleX(0.907)">Needs assessment</div></div>
<div class="rn" style="top:197.68px;height:12.17px"><span>5</span></div>
<div class="cw" style="top:201.08px;left:25.9px;width:76px"><div class="ct" style="transform:scaleX(0.89)">Pre-Assessment</div></div>
<div class="cw" style="top:201.08px;left:102.4px;width:59px"><div class="ct" style="transform:scaleX(0.915)">Pre-Assessment</div></div>
<div class="cw" style="top:201.08px;left:163.1px;width:255px"><div class="ct" style="transform:scaleX(0.955)">3. Budget allocated for AIMS implementation</div></div>
<div class="cw" style="top:201.08px;left:417.9px;width:63px"><div class="ct" style="transform:scaleX(0.955)">Not Started</div></div>
<div class="cw" style="top:201.08px;left:830.3px;width:169.5px"><div class="ct" style="transform:scaleX(0.907)">Needs assessment</div></div>
<div class="rn" style="top:209.85px;height:12.17px"><span>6</span></div>
<div class="cw" style="top:213.25px;left:25.9px;width:76px"><div class="ct" style="transform:scaleX(0.89)">Pre-Assessment</div></div>
<div class="cw" style="top:213.25px;left:102.4px;width:59px"><div class="ct" style="transform:scaleX(0.915)">Pre-Assessment</div></div>
<div class="cw" style="top:213.25px;left:163.1px;width:255px"><div class="ct" style="transform:scaleX(0.955)">4. Implementation team formed with defined roles</div></div>
<div class="cw" style="top:213.25px;left:417.9px;width:63px"><div class="ct" style="transform:scaleX(0.955)">Not Started</div></div>
<div class="cw" style="top:213.25px;left:830.3px;width:169.5px"><div class="ct" style="transform:scaleX(0.907)">Needs assessment</div></div>
<div class="rn" style="top:222.02px;height:12.17px"><span>7</span></div>
<div class="cw" style="top:225.42px;left:25.9px;width:76px"><div class="ct" style="transform:scaleX(0.89)">Pre-Assessment</div></div>
<div class="cw" style="top:225.42px;left:102.4px;width:59px"><div class="ct" style="transform:scaleX(0.915)">Pre-Assessment</div></div>
<div class="cw" style="top:225.42px;left:163.1px;width:255px"><div class="ct" style="transform:scaleX(0.955)">5. Understanding of ISO 42001 requirements</div></div>
<div class="cw" style="top:225.42px;left:417.9px;width:63px"><div class="ct" style="transform:scaleX(0.955)">Not Started</div></div>
<div class="cw" style="top:225.42px;left:830.3px;width:169.5px"><div class="ct" style="transform:scaleX(0.907)">Needs assessment</div></div>
<div class="rn" style="top:234.19px;height:12.17px"><span>8</span></div>
<div class="cw" style="top:237.59px;left:25.9px;width:76px"><div class="ct" style="transform:scaleX(0.89)">Pre-Assessment</div></div>
<div class="cw" style="top:237.59px;left:102.4px;width:59px"><div class="ct" style="transform:scaleX(0.915)">Pre-Assessment</div></div>
<div class="cw" style="top:237.59px;left:163.1px;width:255px"><div class="ct" style="transform:scaleX(0.955)">6. Gap analysis conducted</div></div>
<div class="cw" style="top:237.59px;left:417.9px;width:63px"><div class="ct" style="transform:scaleX(0.955)">Not Started</div></div>
<div class="cw" style="top:237.59px;left:830.3px;width:169.5px"><div class="ct" style="transform:scaleX(0.907)">Needs assessment</div></div>
<div class="rn" style="top:246.36px;height:12.17px"><span>9</span></div>
<div class="cw" style="top:249.76px;left:25.9px;width:76px"><div class="ct" style="transform:scaleX(0.89)">Pre-Assessment</div></div>
<div class="cw" style="top:249.76px;left:102.4px;width:59px"><div class="ct" style="transform:scaleX(0.915)">Pre-Assessment</div></div>
<div class="cw" style="top:249.76px;left:163.1px;width:255px"><div class="ct" style="transform:scaleX(0.955)">7. Implementation timeline defined</div></div>
<div class="cw" style="top:249.76px;left:417.9px;width:63px"><div class="ct" style="transform:scaleX(0.955)">Not Started</div></div>
<div class="cw" style="top:249.76px;left:830.3px;width:169.5px"><div class="ct" style="transform:scaleX(0.907)">Needs assessment</div></div>
<div class="rn" style="top:258.53px;height:12.17px"><span>10</span></div>
<div class="cw" style="top:261.93px;left:25.9px;width:76px"><div class="ct" style="transform:scaleX(0.89)">Pre-Assessment</div></div>
<div class="cw" style="top:261.93px;left:102.4px;width:59px"><div class="ct" style="transform:scaleX(0.915)">Pre-Assessment</div></div>
<div class="cw" style="top:261.93px;left:163.1px;width:255px"><div class="ct" style="transform:scaleX(0.955)">8. Stakeholder buy-in secured</div></div>
<div class="cw" style="top:261.93px;left:417.9px;width:63px"><div class="ct" style="transform:scaleX(0.955)">Not Started</div></div>
<div class="cw" style="top:261.93px;left:830.3px;width:169.5px"><div class="ct" style="transform:scaleX(0.907)">Needs assessment</div></div>
<div class="rn" style="top:270.7px;height:12.17px"><span>11</span></div>
<div class="srow" style="top:270.7px;height:12.17px;width:975.5px"></div>
<div class="st" style="top:274.1px;left:25.2px">Clause 4</div>
<div class="rn" style="top:282.87px;height:12.17px"><span>12</span></div>
<div class="cw" style="top:286.27px;left:25.9px;width:76px"><div class="ct" style="transform:scaleX(0.89)">Clause 4</div></div>
<div class="cw" style="top:286.27px;left:102.4px;width:59px"><div class="ct" style="transform:scaleX(0.915)">4.1</div></div>
<div class="cw" style="top:286.27px;left:163.1px;width:255px"><div class="ct" style="transform:scaleX(0.955)">Internal and external AI-related issues documented</div></div>
<div class="cw" style="top:286.27px;left:417.9px;width:63px"><div class="ct" style="transform:scaleX(0.955)">Not Started</div></div>
<div class="cw" style="top:286.27px;left:830.3px;width:169.5px"><div class="ct" style="transform:scaleX(0.907)">Needs assessment</div></div>
<div class="rn" style="top:295.04px;height:12.17px"><span>13</span></div>
<div class="cw" style="top:298.44px;left:25.9px;width:76px"><div class="ct" style="transform:scaleX(0.89)">Clause 4</div></div>
<div class="cw" style="top:298.44px;left:102.4px;width:59px"><div class="ct" style="transform:scaleX(0.915)">4.1</div></div>
<div class="cw" style="top:298.44px;left:163.1px;width:255px"><div class="ct" style="transform:scaleX(0.955)">Strategic AI objectives defined and aligned with business goals</div></div>
<div class="cw" style="top:298.44px;left:417.9px;width:63px"><div class="ct" style="transform:scaleX(0.955)">Not Started</div></div>
<div class="cw" style="top:298.44px;left:830.3px;width:169.5px"><div class="ct" style="transform:scaleX(0.907)">Needs assessment</div></div>
<div class="rn" style="top:307.21px;height:12.17px"><span>14</span></div>
<div class="cw" style="top:310.61px;left:25.9px;width:76px"><div class="ct" style="transform:scaleX(0.89)">Clause 4</div></div>
<div class="cw" style="top:310.61px;left:102.4px;width:59px"><div class="ct" style="transform:scaleX(0.915)">4.1</div></div>
<div class="cw" style="top:310.61px;left:163.1px;width:255px"><div class="ct" style="transform:scaleX(0.955)">Regulatory landscape for AI mapped and monitored</div></div>
<div class="cw" style="top:310.61px;left:417.9px;width:63px"><div class="ct" style="transform:scaleX(0.955)">Not Started</div></div>
<div class="cw" style="top:310.61px;left:830.3px;width:169.5px"><div class="ct" style="transform:scaleX(0.907)">Needs assessment</div></div>
<div class="rn" style="top:319.38px;height:12.17px"><span>15</span></div>
<div class="cw" style="top:322.78px;left:25.9px;width:76px"><div class="ct" style="transform:scaleX(0.89)">Clause 4</div></div>
<div class="cw" style="top:322.78px;left:102.4px;width:59px"><div class="ct" style="transform:scaleX(0.915)">4.1</div></div>
<div class="cw" style="top:322.78px;left:163.1px;width:255px"><div class="ct" style="transform:scaleX(0.955)">Technological capabilities and limitations assessed</div></div>
<div class="cw" style="top:322.78px;left:417.9px;width:63px"><div class="ct" style="transform:scaleX(0.955)">Not Started</div></div>
<div class="cw" style="top:322.78px;left:830.3px;width:169.5px"><div class="ct" style="transform:scaleX(0.907)">Needs assessment</div></div>
<div class="rn" style="top:331.55px;height:12.17px"><span>16</span></div>
<div class="cw" style="top:334.95px;left:25.9px;width:76px"><div class="ct" style="transform:scaleX(0.89)">Clause 4</div></div>
<div class="cw" style="top:334.95px;left:102.4px;width:59px"><div class="ct" style="transform:scaleX(0.915)">4.1</div></div>
<div class="cw" style="top:334.95px;left:163.1px;width:255px"><div class="ct" style="transform:scaleX(0.955)">Competitive AI environment analyzed</div></div>
<div class="cw" style="top:334.95px;left:417.9px;width:63px"><div class="ct" style="transform:scaleX(0.955)">Not Started</div></div>
<div class="cw" style="top:334.95px;left:830.3px;width:169.5px"><div class="ct" style="transform:scaleX(0.907)">Needs assessment</div></div>
<div class="rn" style="top:343.72px;height:12.17px"><span>17</span></div>
<div class="cw" style="top:347.12px;left:25.9px;width:76px"><div class="ct" style="transform:scaleX(0.89)">Clause 4</div></div>
<div class="cw" style="top:347.12px;left:102.4px;width:59px"><div class="ct" style="transform:scaleX(0.915)">4.2</div></div>
<div class="cw" style="top:347.12px;left:163.1px;width:255px"><div class="ct" style="transform:scaleX(0.955)">All relevant AI stakeholders identified</div></div>
<div class="cw" style="top:347.12px;left:417.9px;width:63px"><div class="ct" style="transform:scaleX(0.955)">Not Started</div></div>
<div class="cw" style="top:347.12px;left:830.3px;width:169.5px"><div class="ct" style="transform:scaleX(0.907)">Needs assessment</div></div>
<div class="rn" style="top:355.89px;height:12.17px"><span>18</span></div>
<div class="cw" style="top:359.29px;left:25.9px;width:76px"><div class="ct" style="transform:scaleX(0.89)">Clause 4</div></div>
<div class="cw" style="top:359.29px;left:102.4px;width:59px"><div class="ct" style="transform:scaleX(0.915)">4.2</div></div>
<div class="cw" style="top:359.29px;left:163.1px;width:255px"><div class="ct" style="transform:scaleX(0.955)">Stakeholder needs and expectations documented</div></div>
<div class="cw" style="top:359.29px;left:417.9px;width:63px"><div class="ct" style="transform:scaleX(0.955)">Not Started</div></div>
<div class="cw" style="top:359.29px;left:830.3px;width:169.5px"><div class="ct" style="transform:scaleX(0.907)">Needs assessment</div></div>
<div class="rn" style="top:368.06px;height:12.17px"><span>19</span></div>
<div class="cw" style="top:371.46px;left:25.9px;width:76px"><div class="ct" style="transform:scaleX(0.89)">Clause 4</div></div>
<div class="cw" style="top:371.46px;left:102.4px;width:59px"><div class="ct" style="transform:scaleX(0.915)">4.2</div></div>
<div class="cw" style="top:371.46px;left:163.1px;width:255px"><div class="ct" style="transform:scaleX(0.955)">Regulatory bodies and their requirements mapped</div></div>
<div class="cw" style="top:371.46px;left:417.9px;width:63px"><div class="ct" style="transform:scaleX(0.955)">Not Started</div></div>
<div class="cw" style="top:371.46px;left:830.3px;width:169.5px"><div class="ct" style="transform:scaleX(0.907)">Needs assessment</div></div>
<div class="rn" style="top:380.23px;height:12.17px"><span>20</span></div>
<div class="cw" style="top:383.63px;left:25.9px;width:76px"><div class="ct" style="transform:scaleX(0.89)">Clause 4</div></div>
<div class="cw" style="top:383.63px;left:102.4px;width:59px"><div class="ct" style="transform:scaleX(0.915)">4.2</div></div>
<div class="cw" style="top:383.63px;left:163.1px;width:255px"><div class="ct" style="transform:scaleX(0.955)">End users and affected parties identified</div></div>
<div class="cw" style="top:383.63px;left:417.9px;width:63px"><div class="ct" style="transform:scaleX(0.955)">Not Started</div></div>
<div class="cw" style="top:383.63px;left:830.3px;width:169.5px"><div class="ct" style="transform:scaleX(0.907)">Needs assessment</div></div>
<div class="rn" style="top:392.4px;height:12.17px"><span>21</span></div>
<div class="cw" style="top:395.8px;left:25.9px;width:76px"><div class="ct" style="transform:scaleX(0.89)">Clause 4</div></div>
<div class="cw" style="top:395.8px;left:102.4px;width:59px"><div class="ct" style="transform:scaleX(0.915)">4.2</div></div>
<div class="cw" style="top:395.8px;left:163.1px;width:255px"><div class="ct" style="transform:scaleX(0.955)">Stakeholder engagement process established</div></div>
<div class="cw" style="top:395.8px;left:417.9px;width:63px"><div class="ct" style="transform:scaleX(0.955)">Not Started</div></div>
<div class="cw" style="top:395.8px;left:830.3px;width:169.5px"><div class="ct" style="transform:scaleX(0.907)">Needs assessment</div></div>
<div class="rn" style="top:404.57px;height:12.17px"><span>22</span></div>
<div class="cw" style="top:407.97px;left:25.9px;width:76px"><div class="ct" style="transform:scaleX(0.89)">Clause 4</div></div>
<div class="cw" style="top:407.97px;left:102.4px;width:59px"><div class="ct" style="transform:scaleX(0.915)">4.3</div></div>
<div class="cw" style="top:407.97px;left:163.1px;width:255px"><div class="ct" style="transform:scaleX(0.955)">AIMS scope clearly defined and documented</div></div>
<div class="cw" style="top:407.97px;left:417.9px;width:63px"><div class="ct" style="transform:scaleX(0.955)">Not Started</div></div>
<div class="cw" style="top:407.97px;left:830.3px;width:169.5px"><div class="ct" style="transform:scaleX(0.907)">Needs assessment</div></div>
<div class="rn" style="top:416.74px;height:12.17px"><span>23</span></div>
<div class="cw" style="top:420.14px;left:25.9px;width:76px"><div class="ct" style="transform:scaleX(0.89)">Clause 4</div></div>
<div class="cw" style="top:420.14px;left:102.4px;width:59px"><div class="ct" style="transform:scaleX(0.915)">4.3</div></div>
<div class="cw" style="top:420.14px;left:163.1px;width:255px"><div class="ct" style="transform:scaleX(0.955)">AI systems and applications included in scope listed</div></div>
<div class="cw" style="top:420.14px;left:417.9px;width:63px"><div class="ct" style="transform:scaleX(0.955)">Not Started</div></div>
<div class="cw" style="top:420.14px;left:830.3px;width:169.5px"><div class="ct" style="transform:scaleX(0.907)">Needs assessment</div></div>
<div class="rn" style="top:428.91px;height:12.17px"><span>24</span></div>
<div class="cw" style="top:432.31px;left:25.9px;width:76px"><div class="ct" style="transform:scaleX(0.89)">Clause 4</div></div>
<div class="cw" style="top:432.31px;left:102.4px;width:59px"><div class="ct" style="transform:scaleX(0.915)">4.3</div></div>
<div class="cw" style="top:432.31px;left:163.1px;width:255px"><div class="ct" style="transform:scaleX(0.955)">Geographic and organizational boundaries defined</div></div>
<div class="cw" style="top:432.31px;left:417.9px;width:63px"><div class="ct" style="transform:scaleX(0.955)">Not Started</div></div>
<div class="cw" style="top:432.31px;left:830.3px;width:169.5px"><div class="ct" style="transform:scaleX(0.907)">Needs assessment</div></div>
<div class="rn" style="top:441.08px;height:12.17px"><span>25</span></div>
<div class="cw" style="top:444.48px;left:25.9px;width:76px"><div class="ct" style="transform:scaleX(0.89)">Clause 4</div></div>
<div class="cw" style="top:444.48px;left:102.4px;width:59px"><div class="ct" style="transform:scaleX(0.915)">4.3</div></div>
<div class="cw" style="top:444.48px;left:163.1px;width:255px"><div class="ct" style="transform:scaleX(0.955)">Life cycle stages covered specified</div></div>
<div class="cw" style="top:444.48px;left:417.9px;width:63px"><div class="ct" style="transform:scaleX(0.955)">Not Started</div></div>
<div class="cw" style="top:444.48px;left:830.3px;width:169.5px"><div class="ct" style="transform:scaleX(0.907)">Needs assessment</div></div>
<div class="rn" style="top:453.25px;height:12.17px"><span>26</span></div>
<div class="cw" style="top:456.65px;left:25.9px;width:76px"><div class="ct" style="transform:scaleX(0.89)">Clause 4</div></div>
<div class="cw" style="top:456.65px;left:102.4px;width:59px"><div class="ct" style="transform:scaleX(0.915)">4.3</div></div>
<div class="cw" style="top:456.65px;left:163.1px;width:255px"><div class="ct" style="transform:scaleX(0.955)">Exclusions documented with justification</div></div>
<div class="cw" style="top:456.65px;left:417.9px;width:63px"><div class="ct" style="transform:scaleX(0.955)">Not Started</div></div>
<div class="cw" style="top:456.65px;left:830.3px;width:169.5px"><div class="ct" style="transform:scaleX(0.907)">Needs assessment</div></div>
<div class="rn" style="top:465.42px;height:12.17px"><span>27</span></div>
<div class="cw" style="top:468.82px;left:25.9px;width:76px"><div class="ct" style="transform:scaleX(0.89)">Clause 4</div></div>
<div class="cw" style="top:468.82px;left:102.4px;width:59px"><div class="ct" style="transform:scaleX(0.915)">4.4</div></div>
<div class="cw" style="top:468.82px;left:163.1px;width:255px"><div class="ct" style="transform:scaleX(0.955)">AIMS processes and their interactions documented</div></div>
<div class="cw" style="top:468.82px;left:417.9px;width:63px"><div class="ct" style="transform:scaleX(0.955)">Not Started</div></div>
<div class="cw" style="top:468.82px;left:830.3px;width:169.5px"><div class="ct" style="transform:scaleX(0.907)">Needs assessment</div></div>
<div class="rn" style="top:477.59px;height:12.17px"><span>28</span></div>
<div class="cw" style="top:480.99px;left:25.9px;width:76px"><div class="ct" style="transform:scaleX(0.89)">Clause 4</div></div>
<div class="cw" style="top:480.99px;left:102.4px;width:59px"><div class="ct" style="transform:scaleX(0.915)">4.4</div></div>
<div class="cw" style="top:480.99px;left:163.1px;width:255px"><div class="ct" style="transform:scaleX(0.955)">AI system life cycle processes defined</div></div>
<div class="cw" style="top:480.99px;left:417.9px;width:63px"><div class="ct" style="transform:scaleX(0.955)">Not Started</div></div>
<div class="cw" style="top:480.99px;left:830.3px;width:169.5px"><div class="ct" style="transform:scaleX(0.907)">Needs assessment</div></div>
<div class="rn" style="top:489.76px;height:12.17px"><span>29</span></div>
<div class="cw" style="top:493.16px;left:25.9px;width:76px"><div class="ct" style="transform:scaleX(0.89)">Clause 4</div></div>
<div class="cw" style="top:493.16px;left:102.4px;width:59px"><div class="ct" style="transform:scaleX(0.915)">4.4</div></div>
<div class="cw" style="top:493.16px;left:163.1px;width:255px"><div class="ct" style="transform:scaleX(0.955)">Risk management process established</div></div>
<div class="cw" style="top:493.16px;left:417.9px;width:63px"><div class="ct" style="transform:scaleX(0.955)">Not Started</div></div>
<div class="cw" style="top:493.16px;left:830.3px;width:169.5px"><div class="ct" style="transform:scaleX(0.907)">Needs assessment</div></div>
<div class="rn" style="top:501.93px;height:12.17px"><span>30</span></div>
<div class="cw" style="top:505.33px;left:25.9px;width:76px"><div class="ct" style="transform:scaleX(0.89)">Clause 4</div></div>
<div class="cw" style="top:505.33px;left:102.4px;width:59px"><div class="ct" style="transform:scaleX(0.915)">4.4</div></div>
<div class="cw" style="top:505.33px;left:163.1px;width:255px"><div class="ct" style="transform:scaleX(0.955)">Performance monitoring processes implemented</div></div>
<div class="cw" style="top:505.33px;left:417.9px;width:63px"><div class="ct" style="transform:scaleX(0.955)">Not Started</div></div>
<div class="cw" style="top:505.33px;left:830.3px;width:169.5px"><div class="ct" style="transform:scaleX(0.907)">Needs assessment</div></div>
<div class="rn" style="top:514.1px;height:12.17px"><span>31</span></div>
<div class="srow" style="top:514.1px;height:12.17px;width:975.5px"></div>
<div class="st" style="top:517.5px;left:25.2px">Clause 5</div>
<div class="rn" style="top:526.27px;height:12.17px"><span>32</span></div>
<div class="cw" style="top:529.67px;left:25.9px;width:76px"><div class="ct" style="transform:scaleX(0.89)">Clause 5</div></div>
<div class="cw" style="top:529.67px;left:102.4px;width:59px"><div class="ct" style="transform:scaleX(0.915)">5.1</div></div>
<div class="cw" style="top:529.67px;left:163.1px;width:255px"><div class="ct" style="transform:scaleX(0.955)">Top management demonstrates commitment to AIMS</div></div>
<div class="cw" style="top:529.67px;left:417.9px;width:63px"><div class="ct" style="transform:scaleX(0.955)">Not Started</div></div>
<div class="cw" style="top:529.67px;left:830.3px;width:169.5px"><div class="ct" style="transform:scaleX(0.907)">Needs assessment</div></div>
<div class="rn" style="top:538.44px;height:12.17px"><span>33</span></div>
<div class="cw" style="top:541.84px;left:25.9px;width:76px"><div class="ct" style="transform:scaleX(0.89)">Clause 5</div></div>
<div class="cw" style="top:541.84px;left:102.4px;width:59px"><div class="ct" style="transform:scaleX(0.915)">5.1</div></div>
<div class="cw" style="top:541.84px;left:163.1px;width:255px"><div class="ct" style="transform:scaleX(0.955)">AI strategy aligned with business objectives</div></div>
<div class="cw" style="top:541.84px;left:417.9px;width:63px"><div class="ct" style="transform:scaleX(0.955)">Not Started</div></div>
<div class="cw" style="top:541.84px;left:830.3px;width:169.5px"><div class="ct" style="transform:scaleX(0.907)">Needs assessment</div></div>
<div class="rn" style="top:550.61px;height:12.17px"><span>34</span></div>
<div class="cw" style="top:554.01px;left:25.9px;width:76px"><div class="ct" style="transform:scaleX(0.89)">Clause 5</div></div>
<div class="cw" style="top:554.01px;left:102.4px;width:59px"><div class="ct" style="transform:scaleX(0.915)">5.1</div></div>
<div class="cw" style="top:554.01px;left:163.1px;width:255px"><div class="ct" style="transform:scaleX(0.955)">Resources allocated for AIMS implementation</div></div>
<div class="cw" style="top:554.01px;left:417.9px;width:63px"><div class="ct" style="transform:scaleX(0.955)">Not Started</div></div>
<div class="cw" style="top:554.01px;left:830.3px;width:169.5px"><div class="ct" style="transform:scaleX(0.907)">Needs assessment</div></div>
<div class="rn" style="top:562.78px;height:12.17px"><span>35</span></div>
<div class="cw" style="top:566.18px;left:25.9px;width:76px"><div class="ct" style="transform:scaleX(0.89)">Clause 5</div></div>
<div class="cw" style="top:566.18px;left:102.4px;width:59px"><div class="ct" style="transform:scaleX(0.915)">5.1</div></div>
<div class="cw" style="top:566.18px;left:163.1px;width:255px"><div class="ct" style="transform:scaleX(0.955)">Leadership communicates importance of AIMS</div></div>
<div class="cw" style="top:566.18px;left:417.9px;width:63px"><div class="ct" style="transform:scaleX(0.955)">Not Started</div></div>
<div class="cw" style="top:566.18px;left:830.3px;width:169.5px"><div class="ct" style="transform:scaleX(0.907)">Needs assessment</div></div>
<div class="hl" style="top:148px;background:#dadada"></div>
<div class="hl frz" style="top:160.82px"></div>
<div class="hl" style="top:172.99px"></div>
<div class="hl" style="top:185.16px"></div>
<div class="hl" style="top:197.33px"></div>
<div class="hl" style="top:209.5px"></div>
<div class="hl" style="top:221.67px"></div>
<div class="hl" style="top:233.84px"></div>
<div class="hl" style="top:246.01px"></div>
<div class="hl" style="top:258.18px"></div>
<div class="hl" style="top:270.35px"></div>
<div class="hl" style="top:282.52px"></div>
<div class="hl" style="top:294.69px"></div>
<div class="hl" style="top:306.86px"></div>
<div class="hl" style="top:319.03px"></div>
<div class="hl" style="top:331.2px"></div>
<div class="hl" style="top:343.37px"></div>
<div class="hl" style="top:355.54px"></div>
<div class="hl" style="top:367.71px"></div>
<div class="hl" style="top:379.88px"></div>
<div class="hl" style="top:392.05px"></div>
<div class="hl" style="top:404.22px"></div>
<div class="hl" style="top:416.39px"></div>
<div class="hl" style="top:428.56px"></div>
<div class="hl" style="top:440.73px"></div>
<div class="hl" style="top:452.9px"></div>
<div class="hl" style="top:465.07px"></div>
<div class="hl" style="top:477.24px"></div>
<div class="hl" style="top:489.41px"></div>
<div class="hl" style="top:501.58px"></div>
<div class="hl" style="top:513.75px"></div>
<div class="hl" style="top:525.92px"></div>
<div class="hl" style="top:538.09px"></div>
<div class="hl" style="top:550.26px"></div>
<div class="hl" style="top:562.43px"></div>
<div class="hl" style="top:574.6px"></div>
<div class="vl" style="left:100px;top:173.34px;height:97.36px"></div>
<div class="vl" style="left:160px;top:173.34px;height:97.36px"></div>
<div class="vl" style="left:416px;top:173.34px;height:97.36px"></div>
<div class="vl" style="left:480px;top:173.34px;height:97.36px"></div>
<div class="vl" style="left:607px;top:173.34px;height:97.36px"></div>
<div class="vl" style="left:777.5px;top:173.34px;height:97.36px"></div>
<div class="vl" style="left:828px;top:173.34px;height:97.36px"></div>
<div class="vl" style="left:998.5px;top:173.34px;height:97.36px"></div>
<div class="vl" style="left:100px;top:282.87px;height:231.23px"></div>
<div class="vl" style="left:160px;top:282.87px;height:231.23px"></div>
<div class="vl" style="left:416px;top:282.87px;height:231.23px"></div>
<div class="vl" style="left:480px;top:282.87px;height:231.23px"></div>
<div class="vl" style="left:607px;top:282.87px;height:231.23px"></div>
<div class="vl" style="left:777.5px;top:282.87px;height:231.23px"></div>
<div class="vl" style="left:828px;top:282.87px;height:231.23px"></div>
<div class="vl" style="left:998.5px;top:282.87px;height:231.23px"></div>
<div class="vl" style="left:100px;top:526.27px;height:48.68px"></div>
<div class="vl" style="left:160px;top:526.27px;height:48.68px"></div>
<div class="vl" style="left:416px;top:526.27px;height:48.68px"></div>
<div class="vl" style="left:480px;top:526.27px;height:48.68px"></div>
<div class="vl" style="left:607px;top:526.27px;height:48.68px"></div>
<div class="vl" style="left:777.5px;top:526.27px;height:48.68px"></div>
<div class="vl" style="left:828px;top:526.27px;height:48.68px"></div>
<div class="vl" style="left:998.5px;top:526.27px;height:48.68px"></div>
<div class="vl" style="left:998.5px;top:149px;height:12.17px"></div>
<div class="vl" style="left:998.5px;top:161.17px;height:12.17px"></div>
<div class="vl" style="left:998.5px;top:270.7px;height:12.17px"></div>
<div class="vl" style="left:998.5px;top:514.1px;height:12.17px"></div>
<div class="a" style="left:23px;top:131px;width:1px;height:18px;background:#c8c8c8"></div><div class="a" style="left:23px;top:149px;width:1.2px;height:426px;background:#d4d4d4"></div>
<svg class="a" style="left:15px;top:141px" width="7" height="7" viewBox="0 0 7 7"><path d="M6.5 0 L6.5 6.5 L0 6.5 Z" fill="#bdbdbd"/></svg>
</div>

<!-- scrollbar -->
<div class="a" style="left:0;top:575px;width:1024px;height:6px;background:#e8e8e8"></div>
<svg class="a" style="left:0.6px;top:575.6px" width="5" height="5" viewBox="0 0 5 5"><path d="M4.5 0 L4.5 5 L0.5 2.5 Z" fill="#616161"/></svg>
<div class="a" style="left:9.8px;top:575.9px;width:877.6px;height:3.9px;background:#8a8a8a;border-radius:2px"></div>

<!-- sheet tabs -->
<div class="a" style="left:0;top:581px;width:1024px;height:20.5px;background:#f3f3f3"></div>
<svg class="a" style="left:5px;top:587px" width="6" height="8" viewBox="0 0 6 8"><path d="M4.5 0.5 L1.5 4 L4.5 7.5" fill="none" stroke="#bdbdbd" stroke-width="0.8"/></svg>
<svg class="a" style="left:25px;top:587px" width="6" height="8" viewBox="0 0 6 8"><path d="M1.5 0.5 L4.5 4 L1.5 7.5" fill="none" stroke="#bdbdbd" stroke-width="0.8"/></svg>
<svg class="a" style="left:43px;top:586.7px" width="8" height="7" viewBox="0 0 8 7"><path d="M0 1 H8 M0 3.5 H8 M0 6 H8" stroke="#616161" stroke-width="0.9"/></svg>
<div class="t tab" style="left:63px;transform:scaleX(0.905)">Overview &amp; Summary</div>
<div class="t tab" style="left:156.6px;color:#242424;-webkit-text-stroke:0.3px #242424;transform:scaleX(0.915)">Assessment Checklist</div>
<div class="a" style="left:156.8px;top:599.3px;width:81px;height:1.3px;background:#2b7a4b;border-radius:1px"></div>
<div class="t tab" style="left:250px;transform:scaleX(0.897)">Gap Analysis</div>
<div class="t tab" style="left:310.6px;transform:scaleX(0.91)">Evidence Repository</div>
<div class="t tab" style="left:398.6px;transform:scaleX(0.912)">Disclaimer</div>
<svg class="a" style="left:449px;top:586.5px" width="8" height="8" viewBox="0 0 8 8"><path d="M4 0.5 V7.5 M0.5 4 H7.5" stroke="#616161" stroke-width="0.9"/></svg>

<!-- status bar -->
<div class="a" style="left:0;top:601.5px;width:1024px;height:6px;background:#fff;border-top:1px solid #e6e6e6"></div>
<div class="t" style="left:10.3px;top:604.6px;font-size:7.5px;color:#616161">Workbook Statistics</div>
</body></html>
